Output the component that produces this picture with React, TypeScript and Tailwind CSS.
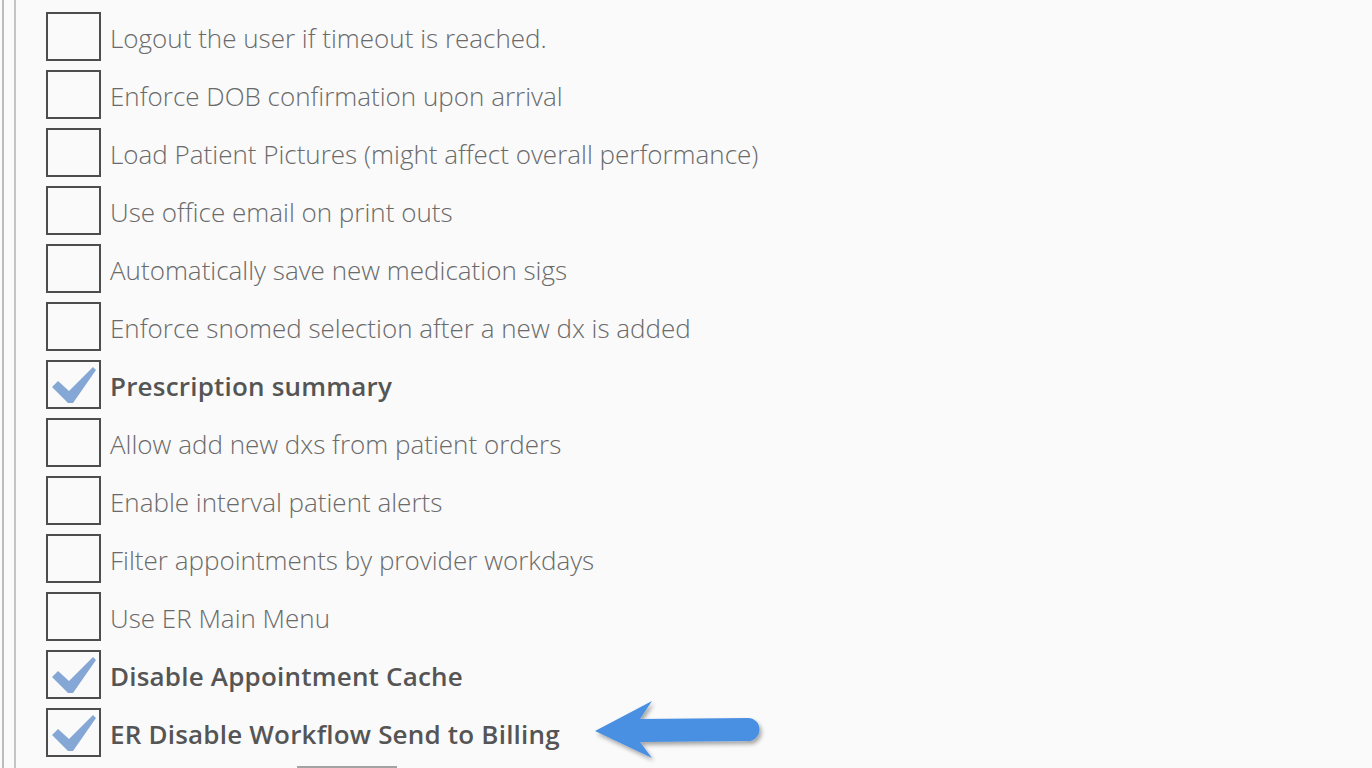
const rows: { label: string; checked: boolean }[] = [
  { label: 'Logout the user if timeout is reached.', checked: false },
  { label: 'Enforce DOB confirmation upon arrival', checked: false },
  { label: 'Load Patient Pictures (might affect overall performance)', checked: false },
  { label: 'Use office email on print outs', checked: false },
  { label: 'Automatically save new medication sigs', checked: false },
  { label: 'Enforce snomed selection after a new dx is added', checked: false },
  { label: 'Prescription summary', checked: true },
  { label: 'Allow add new dxs from patient orders', checked: false },
  { label: 'Enable interval patient alerts', checked: false },
  { label: 'Filter appointments by provider workdays', checked: false },
  { label: 'Use ER Main Menu', checked: false },
  { label: 'Disable Appointment Cache', checked: true },
  { label: 'ER Disable Workflow Send to Billing', checked: true },
];

function Check() {
  return (
    <svg width="51" height="45" viewBox="0 0 51 45" className="block">
      <path d="M4 25 L10 19 L21 29 L45 5 L48 8 L25 41 L20 41 Z" fill="#85a7d6" />
    </svg>
  );
}

function Arrow() {
  return (
    <svg width="180" height="70" viewBox="0 0 180 70" className="absolute left-[544px] top-[-8px]">
      <defs>
        <filter id="sh" x="-10%" y="-20%" width="130%" height="160%">
          <feDropShadow dx="2" dy="3" stdDeviation="2" floodColor="#000" floodOpacity="0.35" />
        </filter>
      </defs>
      <path
        d="M5 31 L62 1 L50 19 L158 18 A11.5 11.5 0 0 1 158 41 L50 42 L62 58 Z"
        fill="#4a8fe2"
        filter="url(#sh)"
      />
    </svg>
  );
}

export default function App() {
  return (
    <div className="w-[1372px] h-[768px] overflow-hidden bg-[#fafafa] pl-[2px]" style={{ fontFamily: '"Open Sans", "Noto Sans", sans-serif' }}>
      <div className="h-full border-l-2 border-[#bdbdbd] pl-[10px]">
        <div className="h-full border-l-2 border-[#c4c4c4] pl-[30px] pt-[12px] relative">
          <div className="flex flex-col gap-[9px]">
            {rows.map((r, i) => (
              <div key={i} className="flex items-center h-[49px] relative">
                <div className="w-[55px] h-[49px] border-2 border-[#4d4d4d] bg-[#fafafa] flex items-center justify-center shrink-0">
                  {r.checked && <Check />}
                </div>
                <span
                  className={
                    r.checked
                      ? 'ml-[9px] pt-[3px] text-[26px] font-semibold text-[#555555] tracking-[0.2px] whitespace-nowrap'
                      : 'ml-[9px] pt-[3px] text-[26px] font-light text-[#6a6a6a] whitespace-nowrap'
                  }
                >
                  {r.label}
                </span>
                {i === rows.length - 1 && <Arrow />}
              </div>
            ))}
          </div>
          <div className="ml-[251px] mt-[9px] w-[100px] h-[3px] bg-[#a3a3a3]" />
        </div>
      </div>
    </div>
  );
}
